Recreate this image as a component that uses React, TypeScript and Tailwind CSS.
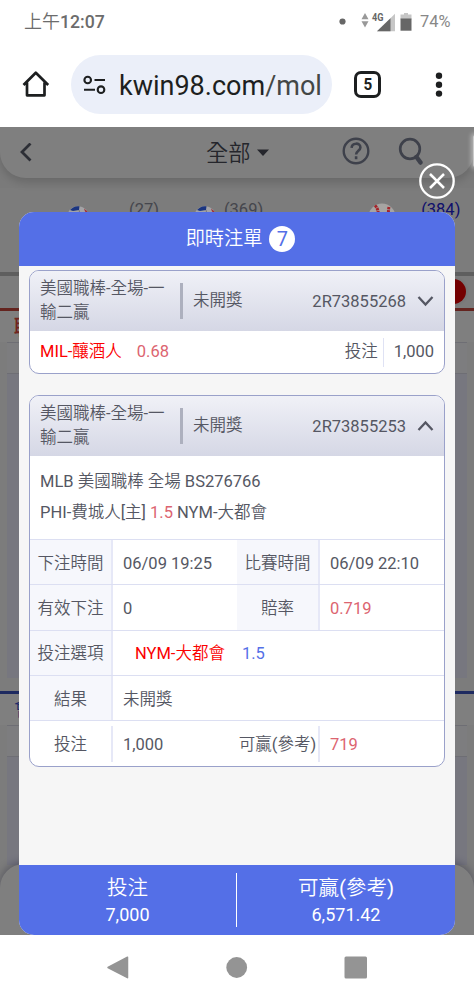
import type { ReactNode } from 'react';

interface Bet {
	id: string;
	category: string;
	status: string;
}

interface BetCardProps {
	bet: Bet;
	open?: boolean;
	children: ReactNode;
}

function StatusBar() {
	return (
		<div className="flex h-[44px] items-center justify-between pr-[24px] pl-[24px] text-[#6c6c6c]">
			<span className="text-[17.7px] leading-[22px] font-medium">
				<span className="text-[18px] font-light">上午</span>12:07
			</span>
			<div className="flex items-center">
				<svg className="-mr-[3px]" width="84" height="22" viewBox="0 0 84 22">
					<circle cx="3.5" cy="10.5" r="3.1" fill="#666" />
					<path d="M22.5 8.2 26 2l3.5 6.2zM22.5 10.2h7L26 16.4z" fill="#999" />
					<text x="33" y="9.7" fontSize="10.5" fontWeight="700" fill="#666" textLength="11.5" lengthAdjust="spacingAndGlyphs">
						4G
					</text>
					<path d="M38 20.2 56 2.7v17.5z" fill="#c6c6c6" />
					<path d="M38 20.2 51.5 7.2v13z" fill="#666" />
					<path d="M61.5 3.5H65V2h4v1.5h3.5v5h-11z" fill="#c6c6c6" />
					<path d="M61.5 7.5h11v12.2h-11z" fill="#666" />
				</svg>
				<span className="w-[30px] text-[16.4px] leading-[22px] whitespace-nowrap text-[#888]">74%</span>
			</div>
		</div>
	);
}

function AddressBar() {
	return (
		<div className="flex h-[83px] items-start pt-[11px] pl-[22px]">
			<svg className="mt-[15px]" width="28" height="28" viewBox="0 0 28 28" fill="none" stroke="#1d1f20" strokeWidth="2.7">
				<path d="M1.5 15 13.8 2.8 26.2 15M5 12.5V25.3h17.5V12.5" strokeLinejoin="round" />
			</svg>
			<div className="ml-[21px] flex h-[59px] w-[261px] items-center rounded-full bg-[#ebeff9] pl-[12px]">
				<svg width="24" height="20" viewBox="0 0 24 20" fill="none" stroke="#1d1f20" strokeWidth="2.1">
					<circle cx="4.7" cy="5" r="3.3" />
					<path d="M11.5 5H22M1 14.7h11" />
					<circle cx="18" cy="14.7" r="3.3" />
				</svg>
				<span className="mt-[2px] ml-[12px] text-[27px] leading-[32px] text-[#1d1f20]">
					kwin98.com<span className="text-[#444746]">/mol</span>
				</span>
			</div>
			<div className="mt-[16px] ml-[22px] flex h-[27px] w-[27px] items-center justify-center rounded-[7px] border-[3px] border-[#1d1f20] text-[17px] leading-none font-bold text-[#1d1f20]">
				<span className="scale-x-90">5</span>
			</div>
			<svg className="mt-[16px] ml-[54px]" width="8" height="28" viewBox="0 0 8 28" fill="#1d1f20">
				<circle cx="4" cy="4.8" r="3.2" />
				<circle cx="4" cy="13.7" r="3.2" />
				<circle cx="4" cy="22.6" r="3.2" />
			</svg>
		</div>
	);
}

function Football() {
	return (
		<svg className="relative z-10 mt-[1px] shrink-0" width="22" height="22" viewBox="0 0 22 22">
			<circle cx="11" cy="11" r="10.8" fill="#a3a3a6" />
			<path d="M3 4Q7-.5 12.5.3L12 4 6 5z" fill="#1b3580" />
			<path d="M17 2.5Q20.5 4.5 21.5 8L18 5.5z" fill="#a03038" />
			<path d="M12 4 13 8" stroke="#77777f" />
		</svg>
	);
}

function Baseball() {
	return (
		<svg className="relative z-10 -mt-[2px] shrink-0" width="28" height="28" viewBox="0 0 28 28">
			<circle cx="14" cy="14" r="13.5" fill="#a6a4a2" />
			<path d="M7 2.5Q13 8 8 23M21 4Q19 12 24 23" fill="none" stroke="#a52228" strokeWidth="3" strokeDasharray="2.5 .7" />
		</svg>
	);
}

function TableSkeleton({ body }: { body: string }) {
	return (
		<div className="mx-[7px]">
			<div className="h-[32px] border-t border-b border-[#dcdce8] bg-[#fafaff]" />
			<div className={body} />
		</div>
	);
}

function Lobby() {
	return (
		<div className="flex h-full flex-col bg-[#f8f8f8]">
			<div className="h-[61px] bg-[#f5f5f5]">
				<div className="flex h-[51px] items-center rounded-b-[26px] bg-white pl-[18px] text-[#5f6170] shadow-[0_4px_10px_rgba(0,0,0,0.16)]">
					<svg width="16" height="20" viewBox="0 0 16 20" fill="none" stroke="#5b5f6c" strokeWidth="2.8">
						<path d="M12.5 .5 4 9l8.5 8.5" />
					</svg>
					<span className="ml-[172px] text-[22.3px] leading-[30px] text-[#4a4c58]">全部</span>
					<svg className="ml-[6px]" width="13" height="8" viewBox="0 0 13 8">
						<path d="M0 .5h12L6 7z" fill="#4a4c58" />
					</svg>
					<svg className="-mt-[3px] ml-[71px]" width="30" height="30" viewBox="0 0 30 30" fill="none" stroke="#7d8296" strokeWidth="2.4">
						<circle cx="15" cy="15" r="12.3" />
						<path d="M10.6 11.9c.2-5.6 8.8-5.5 8.8-.5 0 3.2-4.3 3.5-4.3 7.1M15.1 20.2v3" strokeWidth="2.6" />
					</svg>
					<svg className="-mt-[2px] ml-[27px]" width="28" height="30" viewBox="0 0 28 30" fill="none" stroke="#7d8296">
						<circle cx="12" cy="12" r="9.8" strokeWidth="2.7" />
						<path d="m18.5 20 4 5.5" strokeWidth="4.5" strokeLinecap="round" />
					</svg>
				</div>
			</div>
			<div className="flex h-[84px] items-start pt-[17px] text-[16.5px] leading-[10px] text-[#8a8d9a]">
				<div className="ml-[67px] flex gap-[40px]">
					<Football />
					<span>(27)</span>
				</div>
				<div className="ml-[35px] flex gap-[8px]">
					<Football />
					<span>(369)</span>
				</div>
				<div className="ml-[105px] flex gap-[25px] text-[#2020d8]">
					<Baseball />
					<span>(384)</span>
				</div>
			</div>
			<div className="h-[4px] bg-[#bdbdbd]" />
			<div className="flex h-[32px] items-center justify-end bg-[#f8f8f8] pr-[8px] pb-[2px]">
				<div className="h-[25px] w-[25px] rounded-full bg-[#e80000] shadow-[0_0_2px_2px_#eeeeee]" />
			</div>
			<div className="h-[34px] border-t-3 border-[#c8483e] bg-white pt-[2px] pl-[14px] text-[20px] leading-[30px] font-bold text-[#e0483e]">
				聯
			</div>
			<TableSkeleton body="h-[304px] bg-[#eeeeff]" />
			<div className="mt-[13px] h-[34px] border-t-3 border-[#3c55c0] bg-white pl-[14px] text-[20px] leading-[30px] text-[#3c55d0]">
				會
			</div>
			<TableSkeleton body="h-[108px] bg-[#eeeeff]" />
			<div className="-mt-[1px] h-[71px] rounded-t-[24px] bg-white shadow-[0_-2px_8px_rgba(0,0,60,0.3)]" />
		</div>
	);
}

function BetCard({ bet, open = false, children }: BetCardProps) {
	return (
		<section className="overflow-hidden rounded-[10px] border border-[#9aa1ca] bg-white">
			<header className="flex h-[60px] items-center bg-linear-to-b from-[#f0f1f7] to-[#d5d7e5] pr-[10px] pl-[10px]">
				<div className="w-[140px] text-[16.5px] leading-[24.5px]">
					<div className="w-[130px]">{bet.category}</div>
				</div>
				<div className="h-[36px] w-[3px] bg-[#adb0be]" />
				<span className="ml-[10px]">{bet.status}</span>
				<span className="mt-px ml-auto">{bet.id}</span>
				<svg className={open ? 'ml-[11px] rotate-180' : 'ml-[11px]'} width="17" height="12" viewBox="0 0 17 12" fill="none" stroke="#555763" strokeWidth="2.3">
					<path d="m1.5 2 7 7.5 7-7.5" />
				</svg>
			</header>
			{children}
		</section>
	);
}

function Label({ children }: { children: ReactNode }) {
	return (
		<div className="flex w-[83px] shrink-0 items-center justify-center border-r-[2px] border-[#e6e8f7] bg-[#f6f7fc] pt-[3px] whitespace-nowrap">
			{children}
		</div>
	);
}

function TotalLabel({ children }: { children: ReactNode }) {
	return (
		<div className="flex h-[36px] w-[83px] shrink-0 items-center justify-center border-r-[2px] border-[#e6e8f7] pt-[3px] whitespace-nowrap">
			{children}
		</div>
	);
}

function Row({ children }: { children: ReactNode }) {
	return <div className="flex h-[45.3px] border-t border-[#dcdff2]">{children}</div>;
}

function Value({ children }: { children: ReactNode }) {
	return <div className="flex w-[124px] shrink-0 items-center pt-[3px] pl-[10px]">{children}</div>;
}

function BetSlip() {
	return (
		<div className="relative mx-[19px] mt-[85px] flex h-[723px] flex-col overflow-hidden rounded-[15px] bg-[#f6f6f6] text-[16.5px] leading-[24px] text-[#555763]">
			<header className="flex h-[54px] shrink-0 items-center justify-center gap-[7px] bg-[#546fe7] pl-[7px] text-[19.2px] text-white">
				即時注單
				<span className="flex h-[26px] w-[26px] items-center justify-center rounded-full bg-white text-[20px] text-[#546fe7]">7</span>
			</header>
			<main className="flex flex-1 flex-col gap-[21px] px-[10px] pt-[4px]">
				<BetCard bet={{ id: '2R73855268', category: '美國職棒-全場-一輸二贏', status: '未開獎' }}>
					<div className="flex h-[42px] items-center pr-[10px] pl-[10px]">
						<span className="text-[#fb0000]">MIL-釀酒人</span>
						<span className="ml-[15px] text-[#dc6470]">0.68</span>
						<span className="ml-auto">投注</span>
						<span className="mr-[10px] ml-[5px] h-[29px] w-px bg-[#dfe2f4]" />
						<span>1,000</span>
					</div>
				</BetCard>
				<BetCard open bet={{ id: '2R73855253', category: '美國職棒-全場-一輸二贏', status: '未開獎' }}>
					<div className="h-[83px] pt-[10px] pl-[10px] leading-[31px]">
						<p>MLB 美國職棒 全場 BS276766</p>
						<p>
							PHI-費城人[主] <span className="text-[#dc6470]">1.5</span> NYM-大都會
						</p>
					</div>
					<Row>
						<Label>下注時間</Label>
						<Value>06/09 19:25</Value>
						<Label>比賽時間</Label>
						<Value>06/09 22:10</Value>
					</Row>
					<Row>
						<Label>有效下注</Label>
						<Value>0</Value>
						<Label>賠率</Label>
						<Value>
							<span className="text-[#dc6470]">0.719</span>
						</Value>
					</Row>
					<Row>
						<Label>投注選項</Label>
						<div className="flex items-center gap-[17px] pt-[3px] pl-[22px]">
							<span className="text-[#fb0000]">NYM-大都會</span>
							<span className="text-[#546fe7]">1.5</span>
						</div>
					</Row>
					<Row>
						<Label>結果</Label>
						<Value>未開獎</Value>
					</Row>
					<div className="flex h-[45.8px] items-center border-t border-[#dcdff2]">
						<TotalLabel>投注</TotalLabel>
						<Value>1,000</Value>
						<TotalLabel>可贏(參考)</TotalLabel>
						<Value>
							<span className="text-[#dc6470]">719</span>
						</Value>
					</div>
				</BetCard>
			</main>
			<footer className="flex h-[70px] shrink-0 items-center bg-[#546fe7] text-center text-[18px] text-white">
				<div className="w-[217px] pt-[3px]">
					<div className="text-[20.5px] leading-[27px]">投注</div>
					<div className="leading-[26px]">7,000</div>
				</div>
				<div className="h-[54px] w-px bg-white" />
				<div className="flex-1 pt-[3px]">
					<div className="text-[20.5px] leading-[27px]">可贏(參考)</div>
					<div className="leading-[26px]">6,571.42</div>
				</div>
			</footer>
		</div>
	);
}

export default function App() {
	return (
		<div className="flex h-[1000px] w-[474px] flex-col overflow-hidden bg-white font-['Roboto','Noto_Sans_CJK_TC_DemiLight','Noto_Sans_CJK_TC',sans-serif]">
			<StatusBar />
			<AddressBar />
			<div className="relative h-[808px] overflow-hidden">
				<Lobby />
				<div className="absolute inset-0 bg-black/50" />
				<div className="absolute inset-0 z-20">
					<BetSlip />
					<svg className="absolute top-[36px] right-[19px]" width="36" height="36" viewBox="0 0 36 36" fill="none" stroke="white" strokeWidth="2.3">
						<circle cx="18" cy="18" r="16.7" />
						<path d="m11 11 14 14M25 11 11 25" strokeWidth="2.5" />
					</svg>
					{/* edge handle of the side drawer */}
					<div className="absolute top-[8px] -right-[3px] h-[32px] w-[4px] rounded-full bg-white/60 shadow-[0_0_4px_2px_rgba(255,255,255,0.4)]" />
				</div>
			</div>
			<nav className="flex h-[65px] items-center pl-[106px]">
				<svg width="262" height="26" viewBox="0 0 262 26" fill="#949494">
					<path d="M21.5 2.2v20.5L2 12.5z" stroke="#949494" strokeWidth="1.5" strokeLinejoin="round" />
					<circle cx="130.7" cy="12.5" r="10.4" />
					<rect x="238.5" y="1.5" width="22.5" height="22" rx="1.5" />
				</svg>
			</nav>
		</div>
	);
}
